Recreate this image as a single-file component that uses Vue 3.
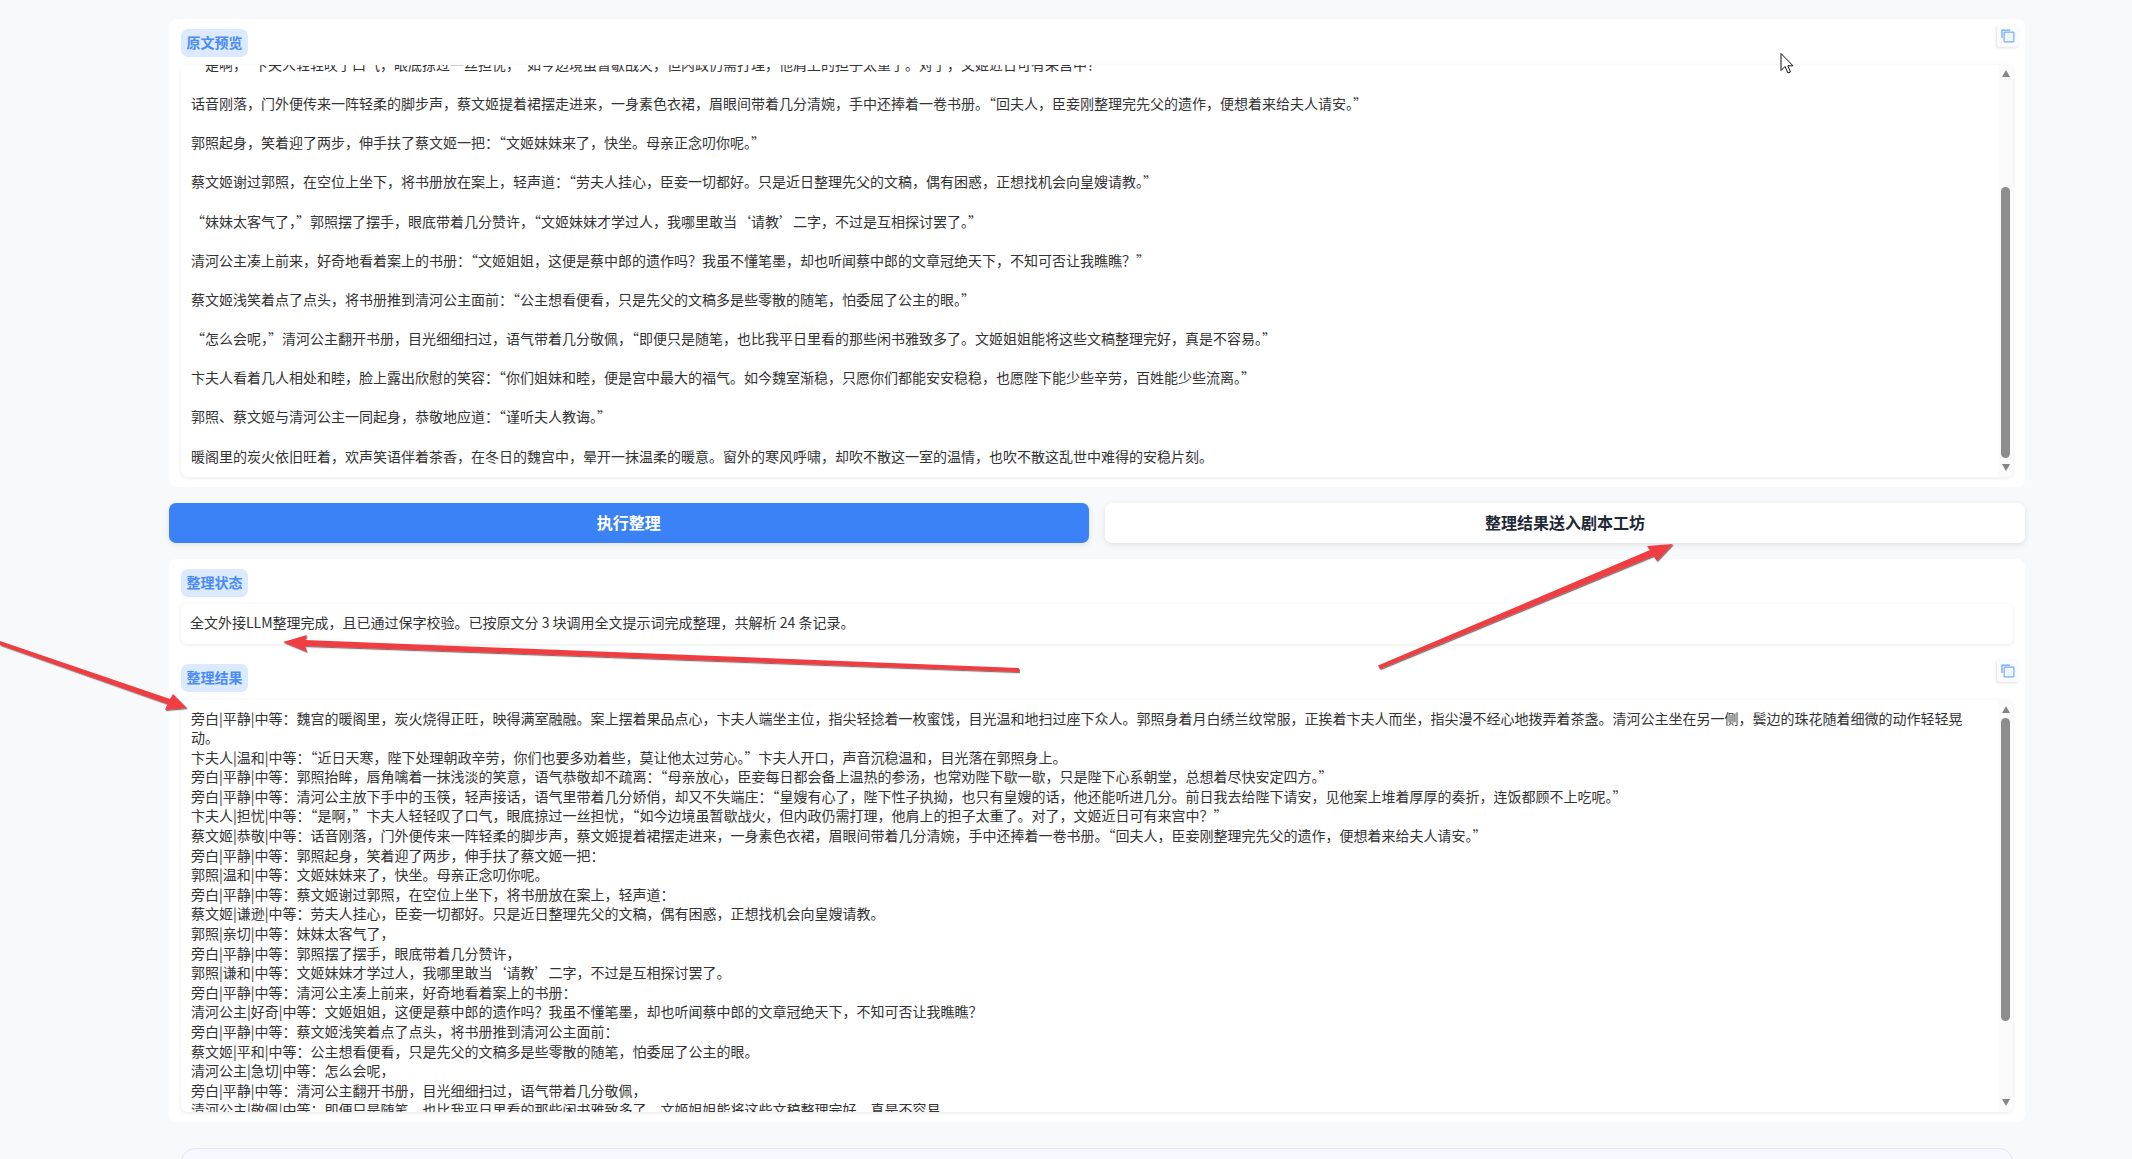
<script setup>
import { onMounted, ref } from 'vue'

const previewBox = ref(null)

const paragraphs = [
  '魏宫的暖阁里，炭火烧得正旺，映得满室融融。案上摆着果品点心，卞夫人端坐主位，指尖轻捻着一枚蜜饯，目光温和地扫过座下众人。郭照身着月白绣兰纹常服，正挨着卞夫人而坐，指尖漫不经心地拨弄着茶盏。清河公主坐在另一侧，鬓边的珠花随着细微的动作轻轻晃动。',
  '“近日天寒，陛下处理朝政辛劳，你们也要多劝着些，莫让他太过劳心。”卞夫人开口，声音沉稳温和，目光落在郭照身上。',
  '郭照抬眸，唇角噙着一抹浅淡的笑意，语气恭敬却不疏离：“母亲放心，臣妾每日都会备上温热的参汤，也常劝陛下歇一歇，只是陛下心系朝堂，总想着尽快安定四方。”',
  '清河公主放下手中的玉筷，轻声接话，语气里带着几分娇俏，却又不失端庄：“皇嫂有心了，陛下性子执拗，也只有皇嫂的话，他还能听进几分。前日我去给陛下请安，见他案上堆着厚厚的奏折，连饭都顾不上吃呢。”',
  '“是啊，”卞夫人轻轻叹了口气，眼底掠过一丝担忧，“如今边境虽暂歇战火，但内政仍需打理，他肩上的担子太重了。对了，文姬近日可有来宫中？”',
  '话音刚落，门外便传来一阵轻柔的脚步声，蔡文姬提着裙摆走进来，一身素色衣裙，眉眼间带着几分清婉，手中还捧着一卷书册。“回夫人，臣妾刚整理完先父的遗作，便想着来给夫人请安。”',
  '郭照起身，笑着迎了两步，伸手扶了蔡文姬一把：“文姬妹妹来了，快坐。母亲正念叨你呢。”',
  '蔡文姬谢过郭照，在空位上坐下，将书册放在案上，轻声道：“劳夫人挂心，臣妾一切都好。只是近日整理先父的文稿，偶有困惑，正想找机会向皇嫂请教。”',
  '“妹妹太客气了，”郭照摆了摆手，眼底带着几分赞许，“文姬妹妹才学过人，我哪里敢当‘请教’二字，不过是互相探讨罢了。”',
  '清河公主凑上前来，好奇地看着案上的书册：“文姬姐姐，这便是蔡中郎的遗作吗？我虽不懂笔墨，却也听闻蔡中郎的文章冠绝天下，不知可否让我瞧瞧？”',
  '蔡文姬浅笑着点了点头，将书册推到清河公主面前：“公主想看便看，只是先父的文稿多是些零散的随笔，怕委屈了公主的眼。”',
  '“怎么会呢，”清河公主翻开书册，目光细细扫过，语气带着几分敬佩，“即便只是随笔，也比我平日里看的那些闲书雅致多了。文姬姐姐能将这些文稿整理完好，真是不容易。”',
  '卞夫人看着几人相处和睦，脸上露出欣慰的笑容：“你们姐妹和睦，便是宫中最大的福气。如今魏室渐稳，只愿你们都能安安稳稳，也愿陛下能少些辛劳，百姓能少些流离。”',
  '郭照、蔡文姬与清河公主一同起身，恭敬地应道：“谨听夫人教诲。”',
  '暖阁里的炭火依旧旺着，欢声笑语伴着茶香，在冬日的魏宫中，晕开一抹温柔的暖意。窗外的寒风呼啸，却吹不散这一室的温情，也吹不散这乱世中难得的安稳片刻。'
]

const records = [
  '旁白|平静|中等：' + paragraphs[0],
  '卞夫人|温和|中等：' + paragraphs[1],
  '旁白|平静|中等：' + paragraphs[2],
  '旁白|平静|中等：' + paragraphs[3],
  '卞夫人|担忧|中等：' + paragraphs[4],
  '蔡文姬|恭敬|中等：' + paragraphs[5],
  '旁白|平静|中等：郭照起身，笑着迎了两步，伸手扶了蔡文姬一把：',
  '郭照|温和|中等：文姬妹妹来了，快坐。母亲正念叨你呢。',
  '旁白|平静|中等：蔡文姬谢过郭照，在空位上坐下，将书册放在案上，轻声道：',
  '蔡文姬|谦逊|中等：劳夫人挂心，臣妾一切都好。只是近日整理先父的文稿，偶有困惑，正想找机会向皇嫂请教。',
  '郭照|亲切|中等：妹妹太客气了，',
  '旁白|平静|中等：郭照摆了摆手，眼底带着几分赞许，',
  '郭照|谦和|中等：文姬妹妹才学过人，我哪里敢当‘请教’二字，不过是互相探讨罢了。',
  '旁白|平静|中等：清河公主凑上前来，好奇地看着案上的书册：',
  '清河公主|好奇|中等：文姬姐姐，这便是蔡中郎的遗作吗？我虽不懂笔墨，却也听闻蔡中郎的文章冠绝天下，不知可否让我瞧瞧？',
  '旁白|平静|中等：蔡文姬浅笑着点了点头，将书册推到清河公主面前：',
  '蔡文姬|平和|中等：公主想看便看，只是先父的文稿多是些零散的随笔，怕委屈了公主的眼。',
  '清河公主|急切|中等：怎么会呢，',
  '旁白|平静|中等：清河公主翻开书册，目光细细扫过，语气带着几分敬佩，',
  '清河公主|敬佩|中等：即便只是随笔，也比我平日里看的那些闲书雅致多了。文姬姐姐能将这些文稿整理完好，真是不容易。',
  '旁白|平静|中等：卞夫人看着几人相处和睦，脸上露出欣慰的笑容：',
  '卞夫人|欣慰|中等：你们姐妹和睦，便是宫中最大的福气。如今魏室渐稳，只愿你们都能安安稳稳，也愿陛下能少些辛劳，百姓能少些流离。',
  '郭照|恭敬|中等：谨听夫人教诲。',
  '旁白|平静|中等：' + paragraphs[14]
]

const previewText = paragraphs.join('\n\n')
const resultText = records.join('\n')

onMounted(() => {
  previewBox.value.scrollTop = previewBox.value.scrollHeight
})
</script>

<template>
  <div class="page" lang="zh-CN">
    <section class="card">
      <span class="badge">原文预览</span>
      <button class="copy" type="button" aria-label="复制">
        <svg width="14" height="14" viewBox="0 0 14 14" fill="none">
          <path d="M1 9V1.2h8" stroke="#60a5fa" stroke-width="1.2" />
          <rect x="3.1" y="3.1" width="9.8" height="9.8" rx="0.8" fill="#eff6ff" stroke="#7aa9f7" stroke-width="1.2" />
        </svg>
      </button>
      <div class="textbox preview">
        <div ref="previewBox" class="textbody">{{ previewText }}</div>
        <div class="scrollbar">
          <i class="arrow up"></i>
          <i class="thumb"></i>
          <i class="arrow down"></i>
        </div>
      </div>
    </section>

    <div class="actions">
      <button class="action primary" type="button">执行整理</button>
      <button class="action secondary" type="button">整理结果送入剧本工坊</button>
    </div>

    <section class="card">
      <span class="badge">整理状态</span>
      <div class="status">全文外接LLM整理完成，且已通过保字校验。已按原文分 3 块调用全文提示词完成整理，共解析 24 条记录。</div>
      <div class="result-head">
        <span class="badge">整理结果</span>
        <button class="copy" type="button" aria-label="复制">
          <svg width="14" height="14" viewBox="0 0 14 14" fill="none">
            <path d="M1 9V1.2h8" stroke="#60a5fa" stroke-width="1.2" />
            <rect x="3.1" y="3.1" width="9.8" height="9.8" rx="0.8" fill="#eff6ff" stroke="#7aa9f7" stroke-width="1.2" />
          </svg>
        </button>
      </div>
      <div class="textbox result">
        <div class="textbody">{{ resultText }}</div>
        <div class="scrollbar">
          <i class="arrow up"></i>
          <i class="thumb"></i>
          <i class="arrow down"></i>
        </div>
      </div>
    </section>

    <div class="next-panel"></div>

    <svg class="annotations" width="2132" height="1159" viewBox="0 0 2132 1159">
      <defs>
        <filter id="arrow-shadow" x="-5%" y="-5%" width="110%" height="110%">
          <feDropShadow dx="0.8" dy="1.2" stdDeviation="0.5" flood-color="#000" flood-opacity="0.55" />
        </filter>
      </defs>
      <g fill="#ef3d42" filter="url(#arrow-shadow)">
        <polygon points="0,641 170,699 173,694 187,708 165,710 167.5,704 0,645" />
        <polygon points="283,642 307,635 305,640 1019,668 1019,672 305,646 307,652" />
        <polygon points="1378,665.5 1650,550 1647,546 1673,544 1657,561 1653.5,556 1380,669" />
      </g>
      <path d="M1781 53.5V70.5L1785 66.5L1788 73L1790.5 72L1787.8 65.8H1793Z" fill="#fff" stroke="#111" stroke-width="1" stroke-linejoin="round" />
    </svg>
  </div>
</template>

<style scoped>
.page {
  position: relative;
  box-sizing: border-box;
  width: 2132px;
  height: 1159px;
  padding: 19px 107px 0 169px;
  overflow: hidden;
  background: #f8f9fb;
  color: #333;
  font-family: "Noto Sans CJK SC", "Noto Sans", sans-serif;
  font-size: 14px;
  line-height: 19.6px;
}

.card {
  position: relative;
  display: flex;
  flex-direction: column;
  align-items: flex-start;
  padding: 10px 12px;
  border-radius: 8px;
  background: #fff;
}

.badge {
  box-sizing: border-box;
  display: inline-block;
  height: 28px;
  padding: 0 5.5px;
  border-radius: 7px;
  background: #dbeafe;
  color: #4a8af6;
  font-weight: 700;
  line-height: 26px;
  white-space: nowrap;
}

.copy {
  position: absolute;
  top: 6px;
  right: 6px;
  display: flex;
  align-items: center;
  justify-content: center;
  width: 22px;
  height: 22px;
  padding: 0;
  border: 0;
  border-radius: 3px;
  background: #fafbfd;
  box-shadow: -1px 1px 3px rgba(0, 0, 0, 0.12);
}

.textbox {
  box-sizing: border-box;
  display: flex;
  width: 100%;
  overflow: hidden;
  border-radius: 6px;
  background: #fff;
  box-shadow: 0 1px 4px rgba(0, 0, 0, 0.09);
}

.textbody {
  flex: 1;
  min-width: 0;
  padding: 9px 10px 11px;
  overflow: hidden;
  white-space: pre-wrap;
}

.scrollbar {
  display: flex;
  flex: none;
  flex-direction: column;
  align-items: center;
  width: 15px;
  background: #fbfbfb;
}

.arrow {
  width: 0;
  height: 0;
  border-right: 4.5px solid transparent;
  border-left: 4.5px solid transparent;
}

.arrow.up {
  margin-top: 6px;
  border-bottom: 7px solid #858585;
}

.arrow.down {
  margin-top: auto;
  margin-bottom: 6px;
  border-top: 7px solid #858585;
}

.thumb {
  width: 9px;
  border-radius: 5px;
  background: #8d8d8d;
}

.preview {
  height: 412px;
  margin-top: 8px;
}

.preview .arrow.up {
  margin-top: 5px;
}

.preview .thumb {
  height: 271px;
  margin-top: 110px;
}

.actions {
  display: grid;
  grid-template-columns: 919.5px 1fr;
  gap: 16.5px;
  margin: 16px 0;
}

.action {
  height: 40px;
  padding: 0 0 1px;
  border: 0;
  border-radius: 7px;
  box-shadow: 0 2px 6px rgba(0, 0, 0, 0.1);
  font: 700 16px/39px "Noto Sans CJK SC", "Noto Sans", sans-serif;
}

.primary {
  background: #3b82f6;
  color: #fff;
}

.secondary {
  background: #fff;
  color: #1f2937;
}

.status {
  box-sizing: border-box;
  width: 100%;
  height: 40px;
  margin-top: 7px;
  padding: 9px 9px 11px;
  border-radius: 6px;
  background: #fff;
  box-shadow: 0 1px 4px rgba(0, 0, 0, 0.09);
}

.result-head {
  position: relative;
  width: 100%;
  height: 28px;
  margin-top: 20px;
}

.result-head .copy {
  top: -4px;
  right: -6px;
}

.result {
  height: 412.5px;
  margin-top: 7.5px;
}

.result .thumb {
  height: 303px;
  margin-top: 5.5px;
}

.next-panel {
  box-sizing: border-box;
  height: 120px;
  margin: 26px 12px 0;
  border: 1px solid #dbe6f6;
  border-radius: 14px;
  background: #f6f9ff;
}

.annotations {
  position: absolute;
  top: 0;
  left: 0;
  pointer-events: none;
}
</style>

<style>
html,
body {
  margin: 0;
  overflow: hidden;
}
</style>
